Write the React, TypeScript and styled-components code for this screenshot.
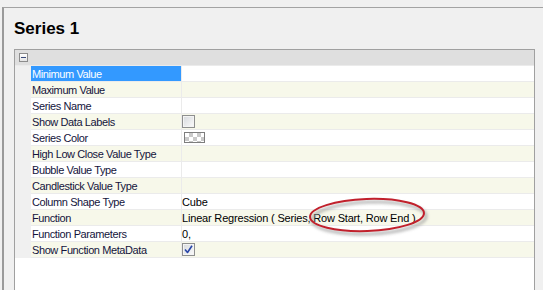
import React from "react";
import styled, { createGlobalStyle } from "styled-components";

const Global = createGlobalStyle`
  html, body { margin: 0; padding: 0; background: #f0f0f0; }
  body { width: 543px; height: 290px; overflow: hidden; }
`;

const Page = styled.div`
  width: 543px;
  height: 290px;
  overflow: hidden;
  background: #f0f0f0;
  padding: 7px 0 0 2px;
  box-sizing: border-box;
`;

const Frame = styled.div`
  border-left: 2px solid #9a9a9a;
  border-top: 1px solid #a3a3a3;
  padding: 11px 0 0 10px;
  height: 300px;
  box-sizing: border-box;
`;

const Title = styled.h1`
  margin: 0;
  font: bold 17px/20px "Liberation Sans", Arial, sans-serif;
  color: #000;
`;

const Grid = styled.div`
  position: relative;
  margin-top: 10px;
  width: 521px;
  height: 260px;
  box-sizing: border-box;
  border: 1px solid #a0a0a0;
  background: #fff;
  font: 11px/16px "Liberation Sans", Arial, sans-serif;
`;

const Header = styled.div`
  height: 15px;
  background: #dfdfdf;
  border-bottom: 1px solid #ebebeb;
  display: flex;
  align-items: center;
  padding-left: 4px;
`;

const Toggle = styled.div`
  width: 9px;
  height: 9px;
  box-sizing: border-box;
  border: 1px solid #8c8c8c;
  background: linear-gradient(#ffffff, #e4e4e4);
  display: flex;
  align-items: center;
  justify-content: center;
  &::after {
    content: "";
    width: 5px;
    height: 1px;
    background: #3a4a7a;
  }
`;

const Row = styled.div`
  display: flex;
  height: 16px;
`;

const Gutter = styled.div`
  width: 16px;
  flex: none;
  background: #f0f0f0;
`;

const NameCell = styled.div<{ $alt: boolean; $selected: boolean }>`
  width: 149px;
  flex: none;
  height: 15px;
  line-height: 16px;
  padding-left: 1px;
  letter-spacing: -0.4px;
  border-bottom: 1px solid #ebebeb;
  border-right: 1px solid #ebebeb;
  background: ${(p) => (p.$selected ? "#3399ff" : p.$alt ? "#f7f8ea" : "#ffffff")};
  color: ${(p) => (p.$selected ? "#ffffff" : "#14143c")};
  white-space: nowrap;
  overflow: hidden;
`;

const ValueCell = styled.div<{ $alt: boolean }>`
  flex: 1;
  height: 15px;
  line-height: 16px;
  letter-spacing: -0.18px;
  border-bottom: 1px solid #ebebeb;
  background: ${(p) => (p.$alt ? "#f7f8ea" : "#ffffff")};
  color: #000;
  white-space: nowrap;
  display: flex;
  align-items: flex-start;
`;

const CheckBox = styled.div`
  width: 13px;
  height: 13px;
  margin-top: 1px;
  box-sizing: border-box;
  border: 1px solid #8e8f8f;
  background: linear-gradient(135deg, #d6d9dd, #fbfbfb);
  box-shadow: inset 0 0 0 1px #f4f4f4;
  display: flex;
  align-items: center;
  justify-content: center;
`;

const Swatch = styled.div`
  width: 21px;
  height: 11px;
  margin: 2px 0 0 2px;
  box-sizing: border-box;
  border: 1px solid #7d7d7d;
  background-color: #ffffff;
  background-image: linear-gradient(45deg, #c9c9c9 25%, transparent 25%, transparent 75%, #c9c9c9 75%),
    linear-gradient(45deg, #c9c9c9 25%, transparent 25%, transparent 75%, #c9c9c9 75%);
  background-size: 8px 8px;
  background-position: 0 0, 4px 4px;
`;

const Callout = styled.svg`
  position: absolute;
  left: 285px;
  top: 140px;
  overflow: visible;
  pointer-events: none;
`;

type Item = { name: string; value?: React.ReactNode };

const Check = () => (
  <svg width="9" height="9" viewBox="0 0 9 9">
    <path d="M1 4.5 L3.5 7.5 L8 0.8" fill="none" stroke="#2946a8" strokeWidth="1.6" strokeLinejoin="round" />
  </svg>
);

const items: Item[] = [
  { name: "Minimum Value" },
  { name: "Maximum Value" },
  { name: "Series Name" },
  { name: "Show Data Labels", value: <CheckBox /> },
  { name: "Series Color", value: <Swatch /> },
  { name: "High Low Close Value Type" },
  { name: "Bubble Value Type" },
  { name: "Candlestick Value Type" },
  { name: "Column Shape Type", value: "Cube" },
  { name: "Function", value: "Linear Regression ( Series, Row Start, Row End )" },
  { name: "Function Parameters", value: "0," },
  {
    name: "Show Function MetaData",
    value: (
      <CheckBox>
        <Check />
      </CheckBox>
    ),
  },
];

export default function App() {
  return (
    <>
      <Global />
      <Page>
        <Frame>
          <Title>Series 1</Title>
          <Grid>
            <Header>
              <Toggle />
            </Header>
            {items.map((it, i) => (
              <Row key={it.name}>
                <Gutter />
                <NameCell $alt={i % 2 === 1} $selected={i === 0}>
                  {it.name}
                </NameCell>
                <ValueCell $alt={i % 2 === 1}>{it.value}</ValueCell>
              </Row>
            ))}
            <Callout width="150" height="60" viewBox="0 0 150 60">
              <defs>
                <filter id="sh" x="-20%" y="-40%" width="140%" height="180%">
                  <feGaussianBlur stdDeviation="1.6" />
                </filter>
              </defs>
              <ellipse cx="69" cy="28" rx="57" ry="16" fill="none" stroke="#9a9a9a" strokeWidth="3" opacity="0.7" filter="url(#sh)" transform="rotate(-2 69 28)" />
              <ellipse cx="67" cy="25" rx="57" ry="16" fill="none" stroke="#c1202c" strokeWidth="2" transform="rotate(-2 67 25)" />
            </Callout>
          </Grid>
        </Frame>
      </Page>
    </>
  );
}
